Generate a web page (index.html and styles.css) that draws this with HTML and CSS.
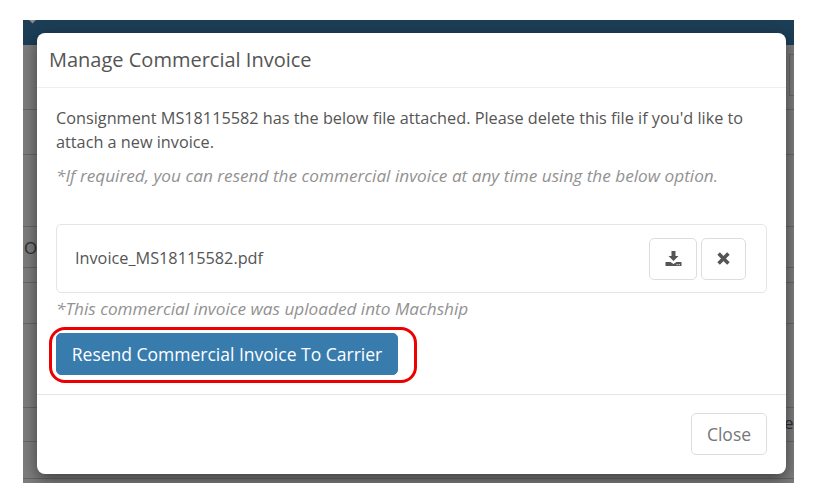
FILE: index.html
```html
<!DOCTYPE html>
<html lang="en">
<head>
    <meta charset="UTF-8">
    <title>Manage Commercial Invoice</title>
    <link rel="stylesheet" href="styles.css">
</head>
<body>
    <div class="app">
        <div class="navbar"><span class="nav-caret"></span></div>
        <div class="rows">
            <div class="row row-a"></div>
            <div class="row row-b"></div>
            <div class="row row-c"></div>
            <div class="row row-d"></div>
            <div class="row row-e"></div>
            <div class="row row-f"></div>
            <div class="row row-g"></div>
            <div class="row row-h"></div>
            <div class="row row-i"></div>
        </div>
        <div class="back-box"></div>
        <span class="back-text back-left">O</span>
        <span class="back-text back-right">en</span>

        <div class="modal">
            <div class="modal-header">
                <h4 class="modal-title">Manage Commercial Invoice</h4>
            </div>
            <div class="modal-body">
                <p class="intro">Consignment MS18115582 has the below file attached. Please delete this file if you'd like to attach a new invoice.</p>
                <p class="note note-resend">*If required, you can resend the commercial invoice at any time using the below option.</p>
                <div class="file-card">
                    <span class="file-name">Invoice_MS18115582.pdf</span>
                    <div class="file-actions">
                        <button class="btn btn-icon btn-download" type="button" aria-label="Download">
                            <svg width="17" height="16" viewBox="0 0 16 16">
                                <path fill="#555" d="M6 0h4v5h3L8 10 3 5h3z"/>
                                <path fill="#555" d="M0 11h5l3 2 3-2h5v4H0z"/>
                                <rect fill="#ccc" x="11" y="13" width="1.3" height="1.2"/>
                                <rect fill="#ccc" x="13.2" y="13" width="1.3" height="1.2"/>
                            </svg>
                        </button>
                        <button class="btn btn-icon btn-delete" type="button" aria-label="Delete">
                            <svg width="13" height="13" viewBox="0 0 13 13">
                                <path stroke="#555" stroke-width="3.6" d="M1.6 1.6l9.8 9.8M11.4 1.6l-9.8 9.8"/>
                            </svg>
                        </button>
                    </div>
                </div>
                <p class="note note-upload">*This commercial invoice was uploaded into Machship</p>
                <button class="btn btn-primary" type="button">Resend Commercial Invoice To Carrier</button>
            </div>
            <div class="modal-footer">
                <button class="btn btn-close" type="button">Close</button>
            </div>
            <div class="highlight"></div>
        </div>
    </div>
</body>
</html>
```

FILE: styles.css
```css
* {
    margin: 0;
    padding: 0;
    box-sizing: border-box;
}

:root {
    --text: #555555;
    --muted: #929292;
    --line: #e5e5e5;
    --blue: #387cae;
}

body {
    font-family: "Open Sans", sans-serif;
    font-size: 16.25px;
    color: var(--text);
    background: #ffffff;
    height: 501px;
    overflow: hidden;
    padding: 20px 21px 18px 23px;
}

.app {
    position: relative;
    height: 463px;
    background: #7d7d7d;
    overflow: hidden;
}

.navbar {
    height: 25px;
    background: #1c3e56;
    position: relative;
}

.nav-caret {
    position: absolute;
    left: 6px;
    top: -5px;
    width: 7px;
    height: 7px;
    background: #8a8a8a;
    transform: rotate(45deg);
}

.rows {
    display: flex;
    flex-direction: column;
}

.row {
    border-bottom: 1px solid #666666;
}

.row-a { height: 65px; }
.row-b { height: 45px; }
.row-c { height: 72px; }
.row-d { height: 41px; }
.row-e { height: 15px; }
.row-f { height: 41px; }
.row-g { height: 84px; }
.row-h { height: 34px; }
.row-i { height: 37px; }

.back-box {
    position: absolute;
    left: 766px;
    top: 34px;
    width: 10px;
    height: 42px;
    border: 1px solid #666666;
}

.back-text {
    position: absolute;
    font-size: 17px;
    color: #2f2f2f;
}

.back-left {
    left: 1px;
    top: 216px;
}

.back-right {
    left: 761px;
    top: 391px;
}

.modal {
    position: absolute;
    left: 14px;
    top: 13px;
    width: 749px;
    height: 441px;
    background: #ffffff;
    border-radius: 8px;
    box-shadow: 0 5px 15px rgba(0, 0, 0, 0.5);
    display: flex;
    flex-direction: column;
}

.modal-header {
    height: 55px;
    padding: 0 12px;
    border-bottom: 1px solid #eeeeee;
    display: flex;
    align-items: center;
}

.modal-title {
    font-size: 20px;
    font-weight: 400;
    line-height: 26px;
}

.modal-body {
    flex: 1;
    padding: 18px 19px 0;
    border-bottom: 1px solid var(--line);
}

.intro {
    line-height: 24px;
}

.note {
    font-style: italic;
    font-size: 17.2px;
    color: var(--muted);
    line-height: 24px;
}

.note-resend {
    margin-top: 10px;
}

.file-card {
    margin-top: 36px;
    height: 69px;
    padding: 0 20px 2px 18px;
    border: 1px solid var(--line);
    border-radius: 5px;
    display: flex;
    align-items: center;
    justify-content: space-between;
}

.file-actions {
    display: flex;
    gap: 4px;
    margin-top: 2px;
}

.btn {
    font-family: inherit;
    font-size: 17.5px;
    background: #ffffff;
    border: 1px solid #dddddd;
    border-radius: 5px;
    display: flex;
    align-items: center;
    justify-content: center;
}

.btn-download {
    width: 48px;
    height: 42px;
}

.btn-delete {
    width: 45px;
    height: 42px;
}

.note-upload {
    margin-top: 4px;
}

.btn-primary {
    margin-top: 12px;
    width: 342px;
    height: 42px;
    background: var(--blue);
    border-color: var(--blue);
    color: #ffffff;
}

.modal-footer {
    height: 79px;
    padding: 18px 19px 0;
    display: flex;
    justify-content: flex-end;
    align-items: flex-start;
}

.btn-close {
    width: 76px;
    height: 42px;
    color: #777777;
}

.highlight {
    position: absolute;
    left: 12px;
    top: 294px;
    width: 368px;
    height: 56px;
    border: 3px solid #ee0000;
    border-radius: 16px;
    pointer-events: none;
}
```
